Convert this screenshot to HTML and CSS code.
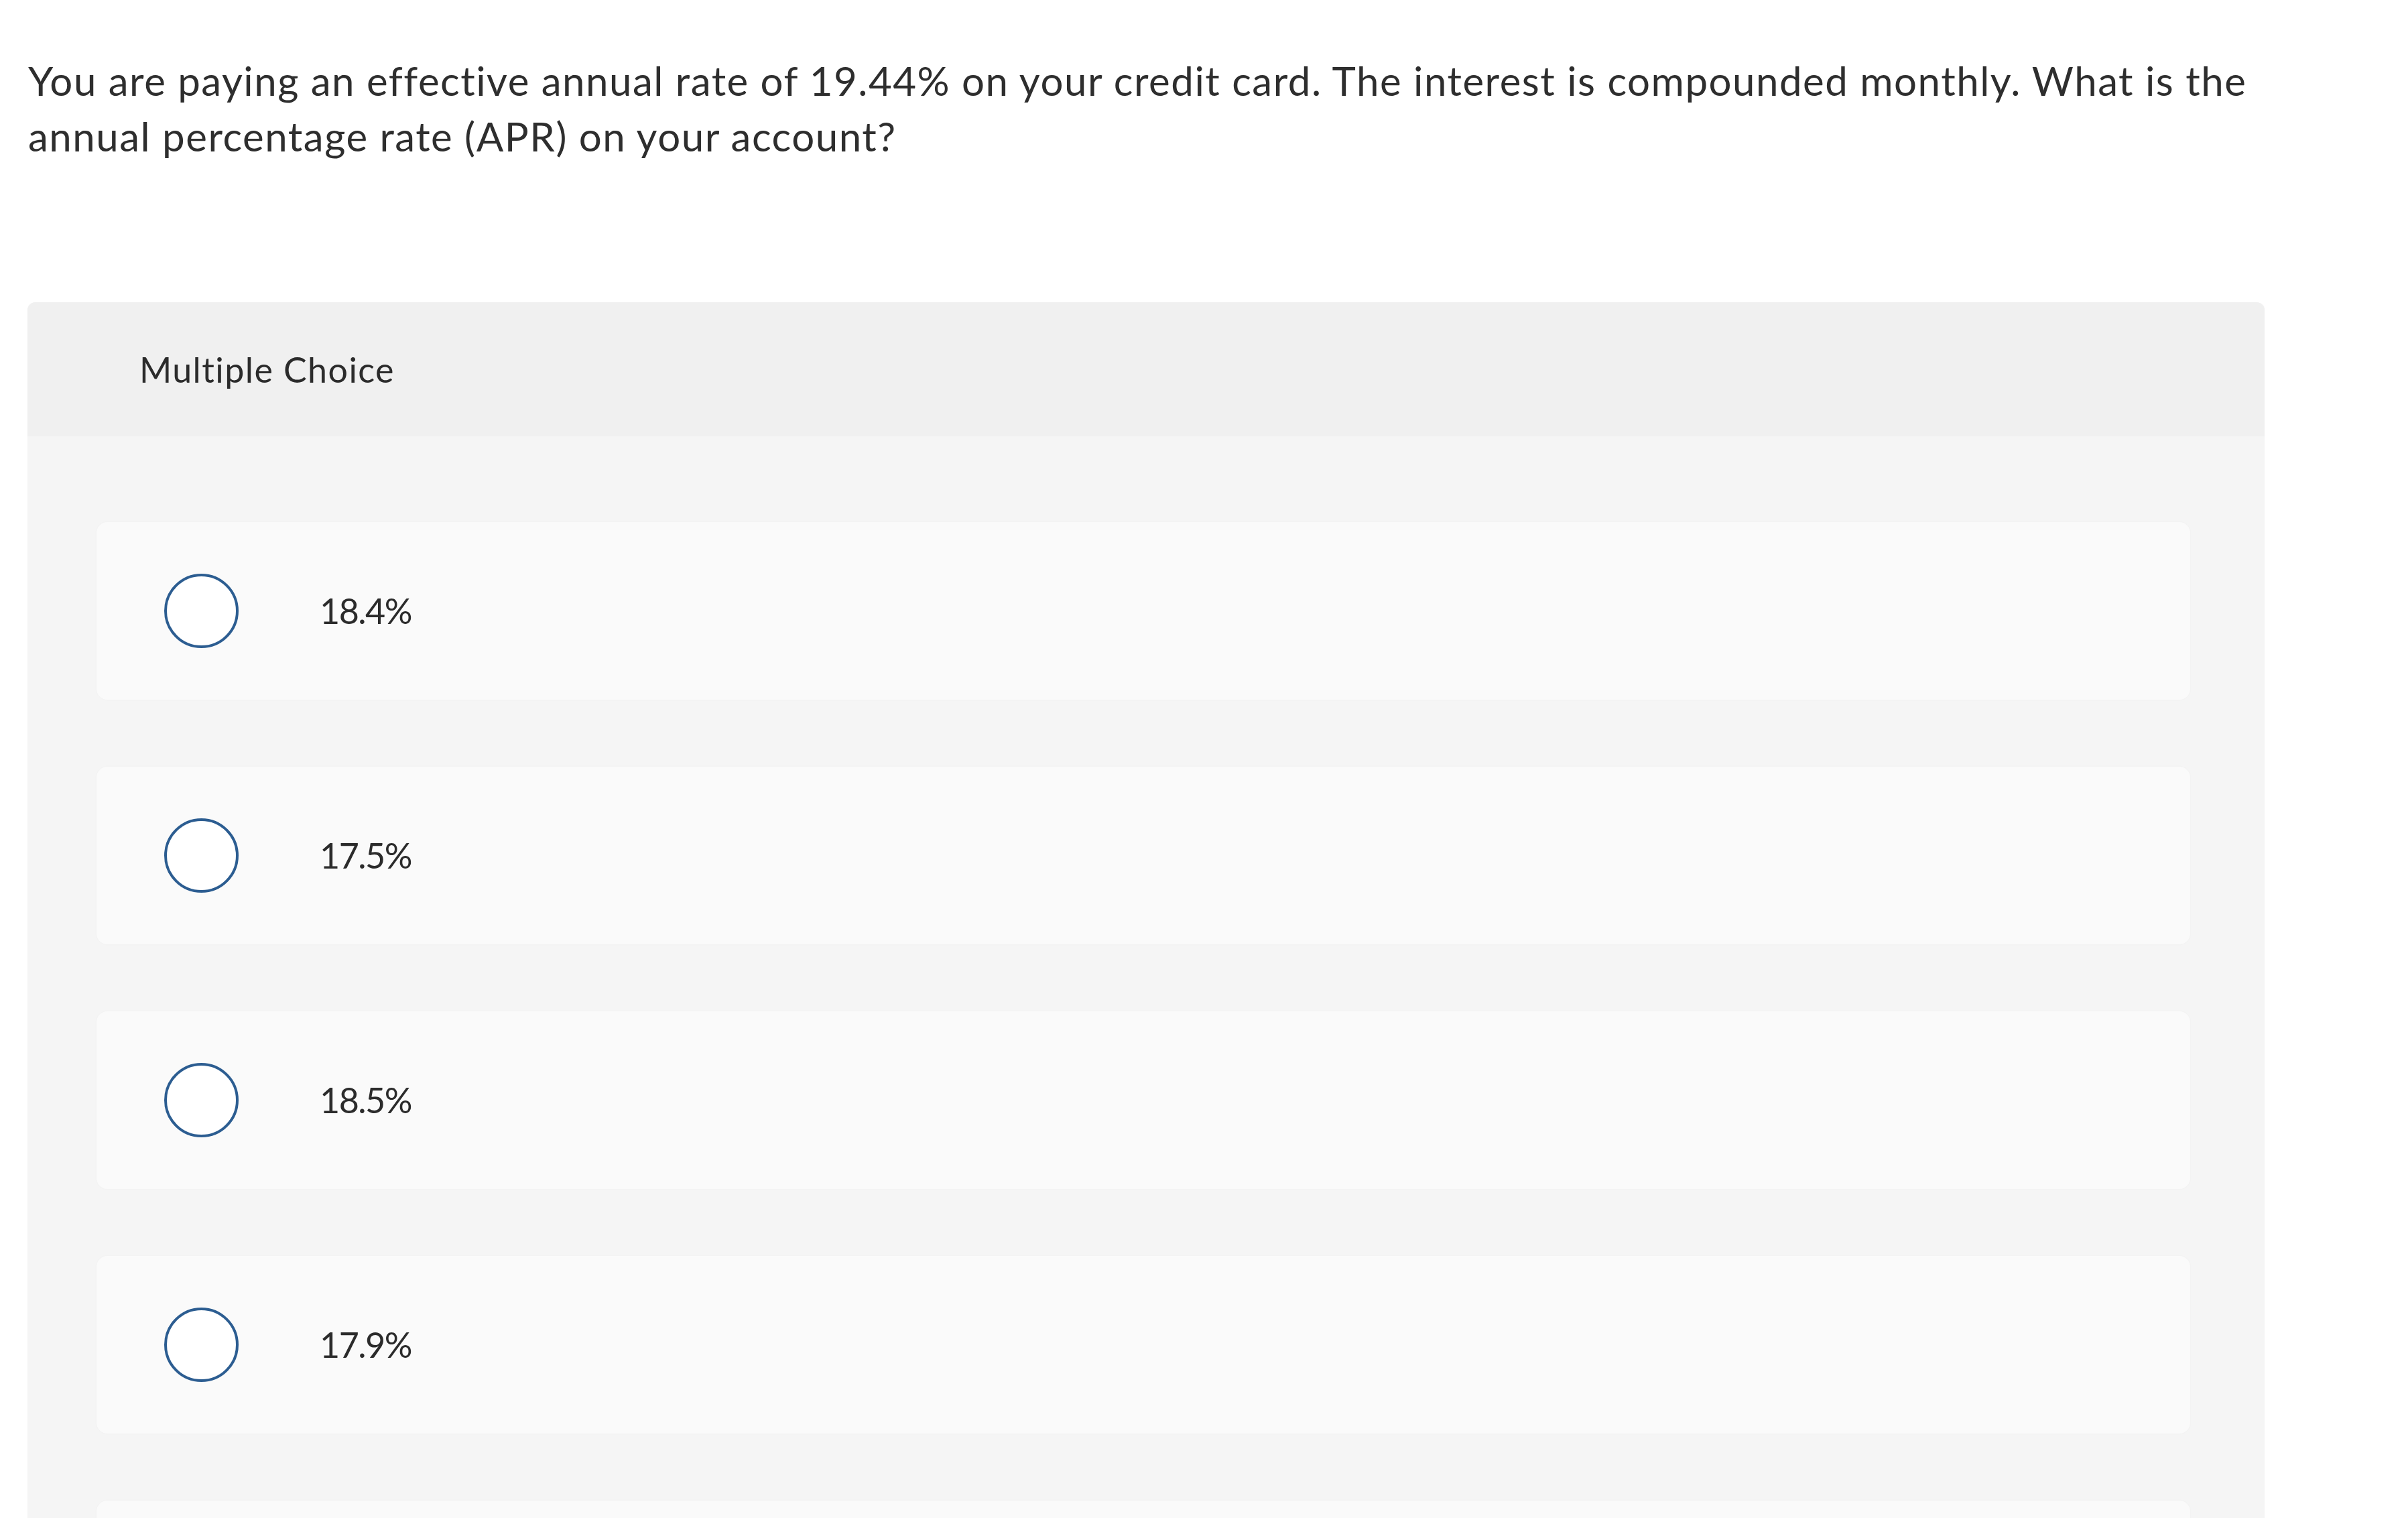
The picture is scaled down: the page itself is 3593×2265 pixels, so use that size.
FILE: index.html
```html
<!DOCTYPE html>
<html lang="en">
<head>
<meta charset="utf-8">
<title>Multiple Choice</title>
<link rel="stylesheet" href="styles.css">
</head>
<body>
<main class="page">
  <p class="question">You are paying an effective annual rate of 19.44% on your credit card. The interest is compounded monthly. What is the annual percentage rate (APR) on your account?</p>
  <section class="mc">
    <header class="mc-head">Multiple Choice</header>
    <div class="mc-body">
      <label class="option"><span class="radio"></span><span class="opt-text">18.4%</span></label>
      <label class="option"><span class="radio"></span><span class="opt-text">17.5%</span></label>
      <label class="option"><span class="radio"></span><span class="opt-text">18.5%</span></label>
      <label class="option"><span class="radio"></span><span class="opt-text">17.9%</span></label>
      <label class="option"><span class="radio"></span><span class="opt-text">19.4%</span></label>
    </div>
  </section>
</main>
</body>
</html>
```
FILE: styles.css
```css
html, body {
  margin: 0;
  padding: 0;
  background: #ffffff;
}
body {
  font-family: "Lato", "Liberation Sans", sans-serif;
  color: #2e2e2e;
}
.page {
  padding: 79px 0 0 42px;
  width: 3338px;
}
.question {
  margin: 0;
  font-size: 60px;
  line-height: 83px;
  letter-spacing: 1.5px;
  width: 3365px;
}
.mc {
  margin-top: 206px;
  margin-left: -1px;
  width: 3338px;
  border-radius: 12px;
  overflow: hidden;
  background: #f5f5f5;
  box-shadow: 0 0 2px rgba(0,0,0,0.04);
}
.mc-head {
  height: 200px;
  display: flex;
  align-items: center;
  padding-left: 167px;
  background: #f0f0f0;
  font-size: 52px;
  line-height: 1.2;
  letter-spacing: 1.4px;
  color: #2b2b2b;
}
.mc-body {
  display: flex;
  flex-direction: column;
  gap: 100px;
  padding: 128px 111px 100px 103px;
}
.option {
  height: 265px;
  display: flex;
  align-items: center;
  padding-left: 101px;
  background: #fafafa;
  border-radius: 16px;
  box-shadow: 0 0 3px rgba(0,0,0,0.03);
}
.radio {
  width: 103px;
  height: 103px;
  border: 4px solid #2c5d91;
  border-radius: 50%;
  background: #ffffff;
  flex: none;
}
.opt-text {
  margin-left: 121px;
  font-size: 52px;
  line-height: 1.2;
  letter-spacing: -1.5px;
  color: #2b2b2b;
}
```
